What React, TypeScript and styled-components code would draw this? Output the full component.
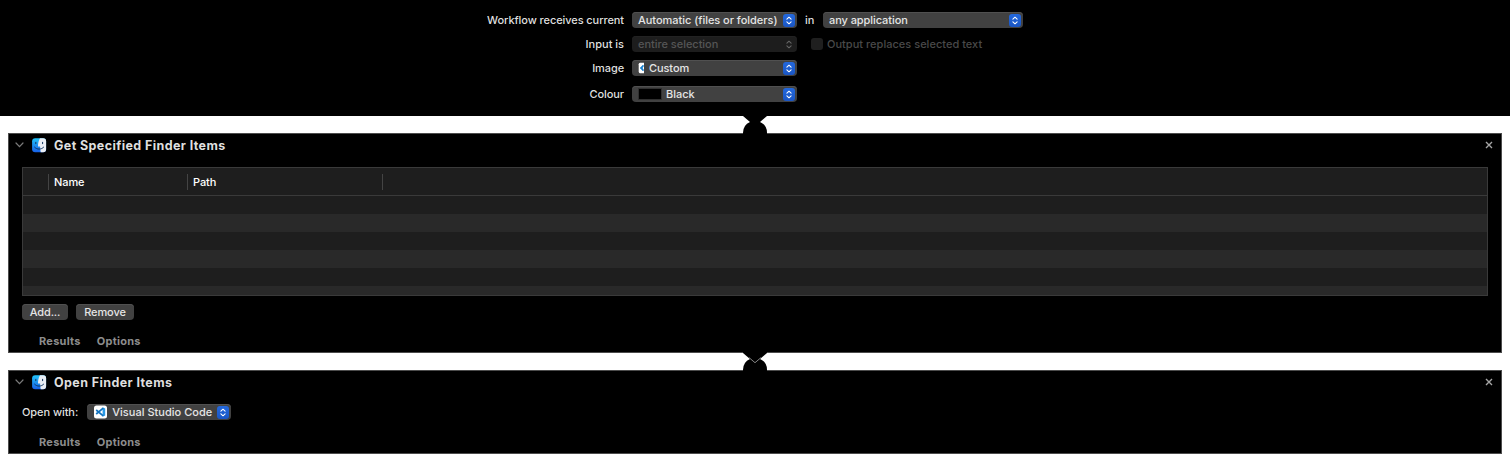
import React from 'react';
import styled, { createGlobalStyle } from 'styled-components';

const GlobalStyle = createGlobalStyle`
  * { box-sizing: border-box; }
  body {
    margin: 0;
    background: #fff;
    font-family: Inter, "Liberation Sans", sans-serif;
    font-size: 11px;
    font-weight: 500;
    line-height: 16px;
    color: #dfdfdf;
    -webkit-font-smoothing: antialiased;
  }
`;

const Page = styled.main`
  width: 1510px;
  height: 466px;
  overflow: hidden;
`;

const Settings = styled.section`
  height: 116px;
  padding-top: 12px;
  background: #000;
`;

const FormRow = styled.div<{ $gap?: number }>`
  display: flex;
  height: 16px;
  margin-bottom: ${(p) => p.$gap ?? 8}px;
`;

const FieldLabel = styled.label`
  width: 624px;
  margin-right: 8px;
  text-align: right;
  white-space: nowrap;
`;

const Track = styled.span<{ $spacing?: number }>`
  letter-spacing: ${(p) => p.$spacing ?? 0}px;
  white-space: nowrap;
`;

const Popup = styled.button<{ $width: number; $disabled?: boolean }>`
  display: flex;
  align-items: center;
  width: ${(p) => p.$width}px;
  height: 16px;
  padding: 0 1px 0 6px;
  border: 0;
  border-radius: 4px;
  background: ${(p) => (p.$disabled ? '#1d1d1d' : '#414141')};
  box-shadow: inset 0 1px 0 ${(p) => (p.$disabled ? '#222' : '#505050')};
  color: ${(p) => (p.$disabled ? '#555' : '#e5e5e5')};
  font: inherit;
  text-align: left;
`;

const Stepper = styled.span<{ $disabled?: boolean }>`
  display: flex;
  width: 12px;
  height: 13px;
  margin-left: auto;
  margin-right: 1px;
  border-radius: 3px;
  background: ${(p) => (p.$disabled ? 'transparent' : 'linear-gradient(#2368dd, #1a56c4)')};
  color: ${(p) => (p.$disabled ? '#666' : '#fff')};
`;

const Joiner = styled.span`
  width: 10px;
  margin: 0 8px;
`;

const Check = styled.span`
  width: 12px;
  height: 12px;
  margin: 2px 4px 0 14px;
  border-radius: 3px;
  background: #1f1f1f;
`;

const Muted = styled.span`
  color: #494949;
  letter-spacing: 0.02px;
`;

const Swatch = styled.span`
  width: 24px;
  height: 12px;
  margin-right: 4px;
  border: 1px solid #303030;
  background: #000;
`;

const Thumb = styled.svg`
  display: block;
  flex: none;
  margin-right: 4px;
`;

const Connector = styled.svg`
  display: block;
  position: relative;
  margin: -1px auto;
`;

const Card = styled.section<{ $height: number }>`
  height: ${(p) => p.$height}px;
  margin: 0 8px;
  padding: 0 13px;
  border: 1px solid #4c4c4c;
  background: #000;
`;

const CardHeader = styled.header`
  display: flex;
  align-items: center;
  height: 22px;
  margin: 0 -5px 0 -7px;
`;

const Title = styled.h2`
  flex: 1;
  margin: 1px 0 0 7px;
  font-size: 12.5px;
  font-weight: 700;
  line-height: 16px;
  letter-spacing: 0.4px;
`;

const Glyph = styled.svg`
  display: block;
  flex: none;
`;

const Chevron = styled(Glyph)`
  margin-right: 8px;
`;

const Table = styled.div`
  height: 129px;
  margin-top: 11px;
  border: 1px solid #3a3a3a;
  background: #1e1e1e;
  overflow: hidden;
`;

const TableHead = styled.div`
  display: flex;
  align-items: center;
  height: 28px;
  border-bottom: 1px solid #3a3a3a;
  color: #fff;
`;

const HeadCell = styled.div<{ $width: number }>`
  width: ${(p) => p.$width}px;
  height: 16px;
  padding-left: 5px;
  border-right: 1px solid #444;
  letter-spacing: -0.08px;
`;

const TableRow = styled.div`
  height: 18px;
  &:nth-child(odd) { background: #292929; }
`;

const Actions = styled.div`
  display: flex;
  gap: 8px;
  margin-top: 8px;
`;

const PushButton = styled.button<{ $width: number }>`
  width: ${(p) => p.$width}px;
  height: 16px;
  padding: 0;
  border: 0;
  border-radius: 4px;
  background: #414141;
  box-shadow: inset 0 1px 0 #505050;
  color: #e5e5e5;
  font: inherit;
  letter-spacing: -0.1px;
`;

const Footer = styled.footer<{ $top: number }>`
  display: flex;
  gap: 16px;
  margin: ${(p) => p.$top}px 0 0 17px;
  color: #8d8d8d;
  font-weight: 700;
  letter-spacing: 0.26px;
`;

const OpenWith = styled.div`
  display: flex;
  gap: 9px;
  height: 16px;
  margin-top: 11px;
`;

const Arrows = ({ disabled }: { disabled?: boolean }) => (
  <Stepper $disabled={disabled}>
    <svg width="12" height="13" viewBox="0 0 12 13" fill="none" stroke="currentColor" strokeWidth="1.1" strokeLinecap="round" strokeLinejoin="round">
      <path d="M3.9 5.1 6 3.2 8.1 5.1M3.9 7.9 6 9.8 8.1 7.9" />
    </svg>
  </Stepper>
);

const Finder = () => (
  <Glyph width="15" height="15" viewBox="0 0 15 15">
    <defs>
      <linearGradient id="finderBlue" x1="0" y1="0" x2="0" y2="1">
        <stop offset="0" stopColor="#22c4fa" />
        <stop offset="1" stopColor="#1760e8" />
      </linearGradient>
    </defs>
    <rect x=".1" y=".3" width="14" height="14" rx="3" fill="url(#finderBlue)" />
    <path d="M8 .3H11.1a3 3 0 0 1 3 3v8a3 3 0 0 1-3 3H8.7C8.3 12.2 8.1 10.4 8.1 8.4H6C6 5.2 6.6 2.4 8 .3Z" fill="#e9edf4" />
    <path d="M3.8 4.3v1.4M10.6 4.3v1.4M2.6 9.2c2.4 2.6 6.6 2.6 9 0" fill="none" stroke="#12355f" strokeWidth="1" strokeLinecap="round" />
  </Glyph>
);

const Disclosure = () => (
  <Chevron width="9" height="6" viewBox="0 0 9 6">
    <path d="M1 1 4.5 4.6 8 1" fill="none" stroke="#7b7b7b" strokeWidth="1.2" strokeLinecap="round" />
  </Chevron>
);

const Close = () => (
  <Glyph width="8" height="8" viewBox="0 0 8 8">
    <path d="M1 1 7 7M7 1 1 7" stroke="#a5a5a5" strokeWidth="1.4" />
  </Glyph>
);

const CodeIcon = () => (
  <Thumb width="15" height="14" viewBox="0 0 15 14">
    <rect x="1" y=".5" width="13" height="13" rx="2.5" fill="#fff" />
    <path d="M9.6 2.3 12.2 3.4v7.2L9.6 11.7Z" fill="#2a9be8" />
    <path d="M10.2 3.2 3.2 9M3.2 5l7 5.8" stroke="#1273bf" strokeWidth="1.7" />
  </Thumb>
);

const CustomIcon = () => (
  <Thumb width="7" height="12" viewBox="0 0 7 12">
    <path d="M2 .8h4v10.4H2A1.5 1.5 0 0 1 .7 9.8V2.2A1.5 1.5 0 0 1 2 .8Z" fill="#fff" />
    <path d="M5.2 3 2.2 6 5.2 9V7.2L4 6 5.2 4.8Z" fill="#1680cf" stroke="#1680cf" strokeWidth=".7" />
  </Thumb>
);

const Link = ({ outlined }: { outlined?: boolean }) => (
  <Connector width="24" height="19" viewBox="0 0 24 19">
    <path d="M0 0H24V1L17 7A12 12 0 0 1 24 18V19H0V18A12 12 0 0 1 7 7L0 1Z" fill="#000" />
    {outlined && <path d="M6 5.6 12 10.7 18 5.6" fill="none" stroke="#858585" strokeWidth="1" />}
  </Connector>
);

interface ItemCardProps {
  title: string;
  height: number;
  children: React.ReactNode;
}

const ItemCard = ({ title, height, children }: ItemCardProps) => (
  <Card $height={height}>
    <CardHeader>
      <Disclosure />
      <Finder />
      <Title>{title}</Title>
      <Close />
    </CardHeader>
    {children}
  </Card>
);

const Tabs = ({ top }: { top: number }) => (
  <Footer $top={top}>
    <span>Results</span>
    <span>Options</span>
  </Footer>
);

export default function App() {
  return (
    <Page>
      <GlobalStyle />
      <Settings>
        <FormRow>
          <FieldLabel><Track $spacing={-0.08}>Workflow receives current</Track></FieldLabel>
          <Popup $width={165}><Track $spacing={-0.03}>Automatic (files or folders)</Track><Arrows /></Popup>
          <Joiner>in</Joiner>
          <Popup $width={200}><Track $spacing={-0.07}>any application</Track><Arrows /></Popup>
        </FormRow>
        <FormRow>
          <FieldLabel>Input is</FieldLabel>
          <Popup $width={165} $disabled><Track $spacing={-0.03}>entire selection</Track><Arrows disabled /></Popup>
          <Check />
          <Muted>Output replaces selected text</Muted>
        </FormRow>
        <FormRow $gap={10}>
          <FieldLabel><Track $spacing={-0.1}>Image</Track></FieldLabel>
          <Popup $width={165}><CustomIcon /><Track $spacing={-0.08}>Custom</Track><Arrows /></Popup>
        </FormRow>
        <FormRow>
          <FieldLabel><Track $spacing={-0.08}>Colour</Track></FieldLabel>
          <Popup $width={165}><Swatch /><Track>Black</Track><Arrows /></Popup>
        </FormRow>
      </Settings>
      <Link />
      <ItemCard title="Get Specified Finder Items" height={220}>
        <Table>
          <TableHead>
            <HeadCell $width={26} />
            <HeadCell $width={139}>Name</HeadCell>
            <HeadCell $width={195}>Path</HeadCell>
          </TableHead>
          {[0, 1, 2, 3, 4, 5].map((n) => <TableRow key={n} />)}
        </Table>
        <Actions>
          <PushButton $width={46}>Add...</PushButton>
          <PushButton $width={58}>Remove</PushButton>
        </Actions>
        <Tabs top={13} />
      </ItemCard>
      <Link outlined />
      <ItemCard title="Open Finder Items" height={84}>
        <OpenWith>
          <Track $spacing={-0.07}>Open with:</Track>
          <Popup $width={144}><CodeIcon /><Track $spacing={0.03}>Visual Studio Code</Track><Arrows /></Popup>
        </OpenWith>
        <Tabs top={14} />
      </ItemCard>
    </Page>
  );
}
